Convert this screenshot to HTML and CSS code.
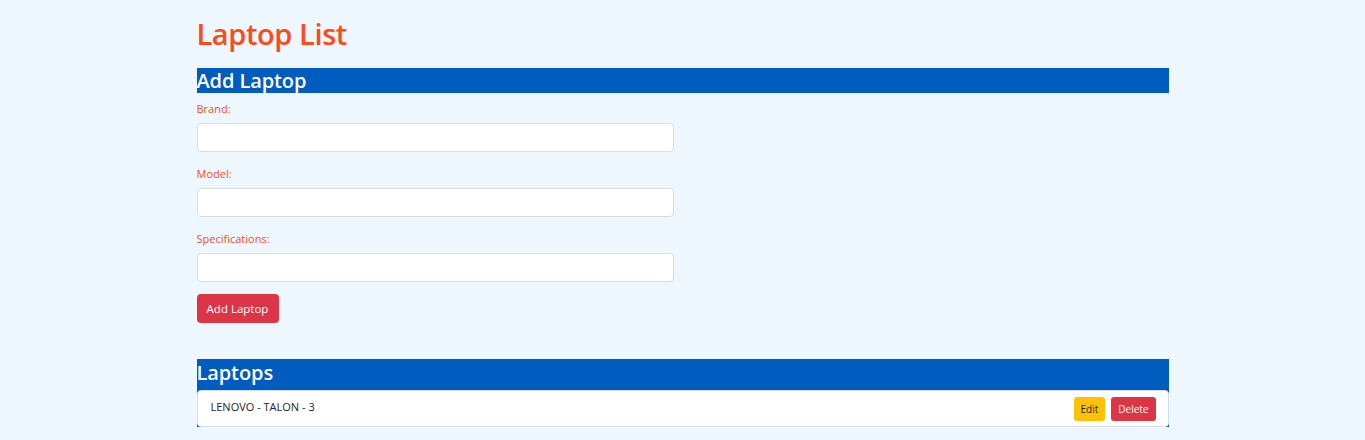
FILE: index.html
```html
<!DOCTYPE html>
<html lang="en">
<head>
<meta charset="utf-8">
<title>Laptop List</title>
<link rel="stylesheet" href="styles.css">
</head>
<body>
<div class="container">
  <h1 class="title">Laptop List</h1>
  <section class="add-section">
    <h2 class="bar">Add Laptop</h2>
    <form class="form">
      <div class="field">
        <label class="label">Brand:</label>
        <input class="input" type="text">
      </div>
      <div class="field">
        <label class="label">Model:</label>
        <input class="input" type="text">
      </div>
      <div class="field">
        <label class="label">Specifications:</label>
        <input class="input" type="text">
      </div>
      <button class="btn btn-danger btn-add" type="button">Add Laptop</button>
    </form>
  </section>
  <section class="list-section">
    <h2 class="bar bar-lg">Laptops</h2>
    <ul class="list">
      <li class="item">
        <span class="item-text">LENOVO - TALON - 3</span>
        <span class="actions">
          <button class="btn btn-sm btn-warning" type="button">Edit</button>
          <button class="btn btn-sm btn-danger" type="button">Delete</button>
        </span>
      </li>
    </ul>
  </section>
</div>
</body>
</html>
```
FILE: styles.css
```css
* { box-sizing: border-box; }
html, body { margin: 0; padding: 0; }
body {
  background: #eef6fe;
  font-family: "Open Sans", "Noto Sans", "Liberation Sans", sans-serif;
  color: #212529;
}
.container {
  width: 972px;
  margin: 0 auto;
  padding-top: 14px;
}
.title {
  margin: 0 0 15px 0;
  font-size: 29px;
  font-weight: 600;
  line-height: 39px;
  color: #fd4a17;
  letter-spacing: -0.4px;
}
.bar {
  margin: 0;
  background: #005cbf;
  color: #ffffff;
  font-size: 20px;
  font-weight: 600;
  line-height: 25px;
  height: 25px;
  letter-spacing: -0.1px;
}
.bar-lg {
  font-size: 20px;
  line-height: 27px;
  height: 31px;
  padding-top: 0;
}
.form {
  display: flex;
  flex-direction: column;
  align-items: flex-start;
  padding-top: 8px;
}
.field {
  display: flex;
  flex-direction: column;
  margin-bottom: 14px;
}
.label {
  font-size: 11px;
  line-height: 15px;
  color: #f2511f;
  margin-bottom: 7px;
}
.input {
  width: 477px;
  height: 29px;
  border: 1px solid #d7dde4;
  border-radius: 4px;
  background: #fff;
  outline: none;
}
.btn {
  font-family: inherit;
  border: none;
  border-radius: 4px;
  cursor: pointer;
  color: #fff;
}
.btn-add {
  margin-top: -2px;
  width: 82px;
  height: 29px;
  font-size: 11.5px;
  padding: 0;
}
.btn-danger { background: #dc3545; color: #fff; }
.btn-warning { background: #ffc107; color: #212529; }
.list-section {
  margin-top: 36px;
  background: #005cbf;
}
.list {
  list-style: none;
  margin: 0;
  padding: 0;
}
.item {
  display: flex;
  justify-content: space-between;
  align-items: flex-start;
  background: #fff;
  border: 1px solid #d7dde4;
  border-radius: 4px;
  height: 37px;
  padding: 6px 12px 0 13px;
}
.item-text {
  font-size: 11px;
  line-height: 20px;
  color: #212529;
}
.actions {
  display: flex;
  gap: 6px;
}
.btn-sm {
  height: 24px;
  font-size: 10px;
  padding: 0 7px;
  border-radius: 3px;
}
```
